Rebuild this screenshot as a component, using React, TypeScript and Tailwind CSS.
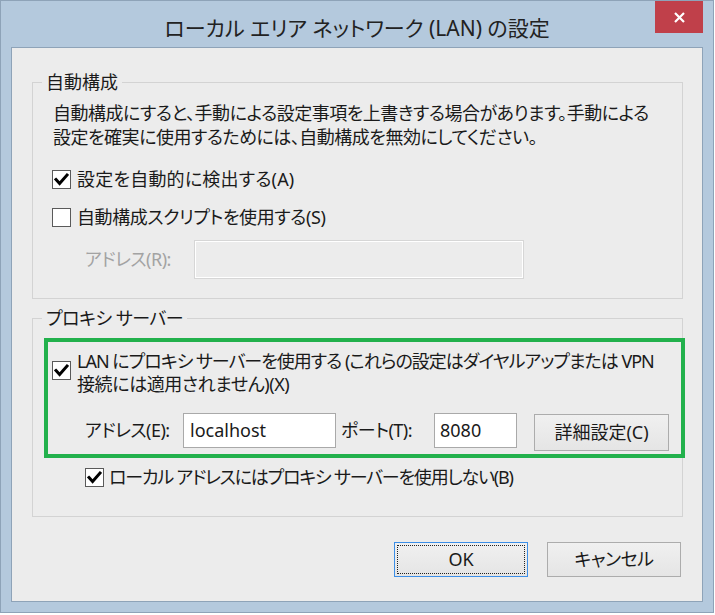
import React from "react";

const Check = () => (
  <svg width="15" height="15" viewBox="0 0 15 15">
    <path d="M2 7.5 L5.6 11.5 L13 3" fill="none" stroke="#000" strokeWidth="3" strokeLinecap="square" />
  </svg>
);

function Checkbox({ checked }: { checked?: boolean }) {
  return (
    <span className="w-[19px] h-[19px] border border-[#5a5a5a] bg-white flex items-center justify-center shrink-0">
      {checked && <Check />}
    </span>
  );
}

const btn =
  "border border-[#acacac] bg-gradient-to-b from-[#f0f0f0] to-[#e5e5e5] flex items-center justify-center text-[18px] text-[#1a1a1a]";

export default function App() {
  return (
    <div className="w-[714px] h-[613px] border border-[#8ea3b8] bg-[#b4c9dd] flex flex-col px-[10px] pb-[10px] font-['Noto_Sans','Noto_Sans_CJK_JP',sans-serif] [font-feature-settings:'palt'] text-[#1a1a1a] text-[18px]">
      {/* title bar */}
      <div className="h-[46px] flex items-start shrink-0">
        <div className="w-[48px]" />
        <div className="flex-1 text-center text-[21px] leading-[26px] pt-[14px] text-[#222]">
          ローカル エリア ネットワーク (LAN) の設定
        </div>
        <div className="w-[48px] h-[32px] bg-[#c0404a] flex items-center justify-center">
          <svg width="11" height="11" viewBox="0 0 11 11">
            <path d="M1 1 L10 10 M10 1 L1 10" stroke="#fff" strokeWidth="2.2" />
          </svg>
        </div>
      </div>

      {/* client area */}
      <div className="flex-1 border border-[#8ea3b8] bg-[#ececec] flex flex-col pl-[20px] pr-[19px]">
        {/* group 1 */}
        <fieldset className="mt-[24px] border border-[#d3d3d3]">
          <legend className="ml-[9px] px-[4px] leading-[20px]">自動構成</legend>
          <div className="pt-[9px] pl-[19px] pb-[19px]">
            <p className="leading-[24px] pl-[1px] tracking-[-0.5px] whitespace-nowrap">
              自動構成にすると、手動による設定事項を上書きする場合があります。手動による
              <br />
              設定を確実に使用するためには、自動構成を無効にしてください。
            </p>
            <div className="mt-[18px] h-[24px] flex items-center gap-[6px]">
              <Checkbox checked />
              <span className="tracking-[0.2px]">設定を自動的に検出する(A)</span>
            </div>
            <div className="mt-[14px] h-[24px] flex items-center gap-[6px]">
              <Checkbox />
              <span className="tracking-[-0.4px]">自動構成スクリプトを使用する(S)</span>
            </div>
            <div className="mt-[11px] flex items-center pl-[33px]">
              <span className="w-[109px] text-[#a3a3a3] tracking-[-0.5px]">アドレス(R):</span>
              <div className="w-[330px] h-[39px] border border-[#d6d6d6] bg-[#ececec] shadow-[inset_0_0_0_1px_#ffffff]" />
            </div>
          </div>
        </fieldset>

        {/* group 2 */}
        <fieldset className="mt-[9px] border border-[#d3d3d3]">
          <legend className="ml-[9px] px-[4px] leading-[20px] tracking-[-0.5px]">プロキシ サーバー</legend>
          <div className="pt-[10px] pl-[11px] pb-[27px]">
            <div className="h-[120px] border-4 border-[#22b14c] mr-[-3px] pt-[8px] pl-[4px]">
              <div className="flex items-start gap-[6px]">
                <span className="mt-[11px]">
                  <Checkbox checked />
                </span>
                <span className="leading-[23px] whitespace-nowrap flex flex-col">
                  <span className="tracking-[-1px]">
                    LAN にプロキシ サーバーを使用する (これらの設定はダイヤルアップまたは VPN
                  </span>
                  <span className="tracking-[-0.4px]">接続には適用されません)(X)</span>
                </span>
              </div>
              <div className="mt-[17px] flex items-start pl-[33px]">
                <span className="w-[98px] leading-[35px] tracking-[-0.5px]">アドレス(E):</span>
                <div className="w-[153px] h-[35px] border border-[#a9a9a9] bg-white pl-[6px] leading-[33px]">
                  localhost
                </div>
                <span className="ml-[5px] w-[93px] leading-[35px] tracking-[-0.5px]">ポート(T):</span>
                <div className="w-[83px] h-[35px] border border-[#a9a9a9] bg-white pl-[5px] leading-[33px]">
                  8080
                </div>
                <div className={`ml-[17px] mt-[1px] w-[135px] h-[37px] ${btn}`}>詳細設定(C)</div>
              </div>
            </div>
            <div className="mt-[7px] ml-[41px] h-[24px] flex items-center gap-[5px]">
              <Checkbox checked />
              <span className="tracking-[-1.2px] whitespace-nowrap">
                ローカル アドレスにはプロキシ サーバーを使用しない(B)
              </span>
            </div>
          </div>
        </fieldset>

        {/* buttons */}
        <div className="mt-[25px] flex justify-end gap-[19px] pr-[2px]">
          <div className="relative w-[134px] h-[35px] border border-[#3c8ee6] bg-gradient-to-b from-[#f0f0f0] to-[#e5e5e5] flex items-center justify-center text-[18px]">
            <span className="absolute inset-[2px] border border-dotted border-[#222]" />
            OK
          </div>
          <div className={`w-[134px] h-[35px] ${btn} tracking-[-0.5px]`}>キャンセル</div>
        </div>
      </div>
    </div>
  );
}
